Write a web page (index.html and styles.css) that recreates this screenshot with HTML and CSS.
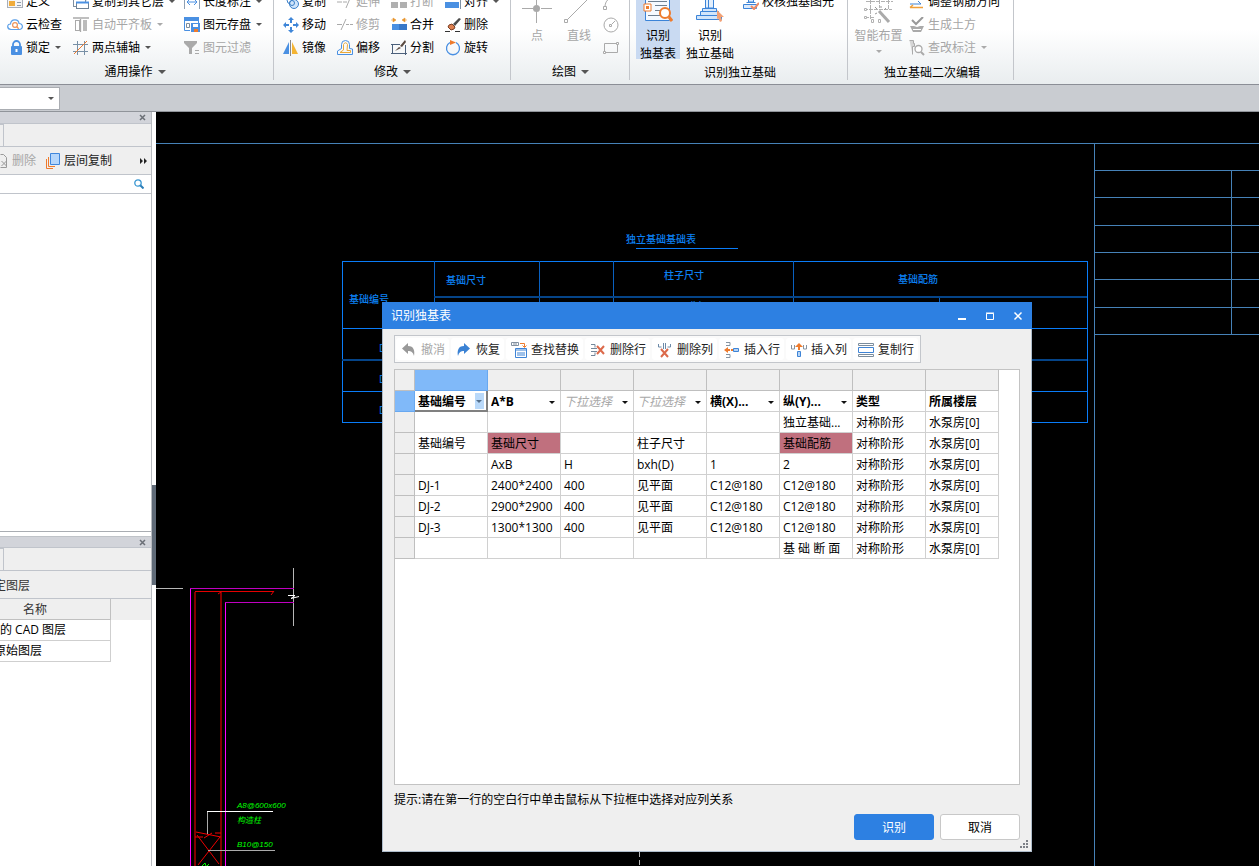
FILE: index.html
```html
<!DOCTYPE html>
<html lang="zh-CN">
<head>
<meta charset="utf-8">
<title>识别独基表</title>
<link rel="stylesheet" href="styles.css">
</head>
<body>
<div class="app">

<header class="ribbon">
  <section class="group group-common">
    <div class="tools">
      <button class="tool"><svg class="icon" viewBox="0 0 16 16"><rect x=".5" y=".5" width="15" height="13" fill="#f4f5f7" stroke="#a9afb8"/><path d="M2 7h6v5H2z" fill="#f0ac3c"/><path d="M2 3h12M10 8.500h4M10 11.500h4" stroke="#8f9cab"/></svg>定义</button>
      <button class="tool"><svg class="icon" viewBox="0 0 16 16"><rect x="4" y="1" width="9" height="5" fill="none" stroke="#7d8ea0"/><rect x=".5" y="4.500" width="12" height="8" fill="#fff" stroke="#7d8ea0"/><rect x="3.500" y="8.500" width="12" height="6" fill="#fff" stroke="#6f8296"/><path d="M3 8.500h13" stroke="#4a90e2" stroke-width="2"/></svg>复制到其它层<i class="caret"></i></button>
      <button class="tool"><svg class="icon" viewBox="0 0 16 16"><path d="M.5 3v12M15.500 3v12" stroke="#8fa0b2"/><path d="M3 8h10M6 5 3 8l3 3M10 5l3 3-3 3" fill="none" stroke="#4a90e2"/></svg>长度标注<i class="caret"></i></button>
      <button class="tool"><svg class="icon" viewBox="0 0 16 16"><path d="M4 12.500C-.8 12 .2 6.700 3.500 7 4 1.800 11.500 1.500 12 6.500c4.500.3 4.500 6 0 6z" fill="#fff" stroke="#5b9fe8" stroke-width="1.200"/><circle cx="8" cy="8" r="2.400" fill="#fff" stroke="#ee9356" stroke-width="1.200"/><path d="m9.700 9.700 2 2" stroke="#ee9356" stroke-width="1.300"/></svg>云检查</button>
      <button class="tool" disabled><svg class="icon" viewBox="0 0 16 16"><path d="M0 1h16M7.500 2v13" stroke="#aaa" stroke-width="1.300"/><rect x="2.500" y="3.500" width="4" height="10" fill="none" stroke="#aaa"/><path d="M10 3h4v11h-4z" fill="#bbb"/></svg>自动平齐板<i class="caret"></i></button>
      <button class="tool"><svg class="icon" viewBox="0 0 16 16"><path d="M6 13.500H.5v-13h14V6" fill="none" stroke="#4a90e2"/><path d="M0 0h15v4H0z" fill="#4a90e2"/><path d="M2.500 6.500h3v4h-3z" fill="none" stroke="#7e8b99"/><path d="M7 6h9v9H7z" fill="#4a90e2"/><path d="M9 7h5v3H9z" fill="#fff"/><path d="M10 12h4v3h-4z" fill="#ee7b2d"/></svg>图元存盘<i class="caret"></i></button>
      <button class="tool"><svg class="icon" viewBox="0 0 16 16"><path d="M6 7V4.500a3 3 0 0 1 7 0V7" fill="none" stroke="#4a90e2" stroke-width="1.800"/><rect x="4" y="6" width="11" height="9" rx="1" fill="#4a90e2"/><path d="M9.500 9v3" stroke="#fff" stroke-width="2"/></svg>锁定<i class="caret"></i></button>
      <button class="tool"><svg class="icon" viewBox="0 0 16 16"><path d="M4.500 1v14M11.500 1v14M0 4.500h15M0 11.500h15" stroke="#7890a6"/><path d="M1 14 14 1" stroke="#ee7b2d"/></svg>两点辅轴<i class="caret"></i></button>
      <button class="tool" disabled><svg class="icon" viewBox="0 0 16 16"><path d="M0 1h13v2L8 8v6H5V8L0 3z" fill="#aaa"/><path d="M11 10.500h4M11 13.500h4" stroke="#aaa"/></svg>图元过滤</button>
    </div>
    <button class="group-title">通用操作<i class="caret"></i></button>
  </section>

  <section class="group group-edit">
    <div class="tools">
      <button class="tool"><svg class="icon" viewBox="0 0 16 16"><circle cx="8" cy="6" r="4" fill="none" stroke="#3a7fc8"/><circle cx="11" cy="10" r="4.500" fill="#cfe4fa" stroke="#3a7fc8"/><circle cx="9" cy="9" r="2.500" fill="none" stroke="#3a7fc8"/></svg>复制</button>
      <button class="tool" disabled><svg class="icon" viewBox="0 0 16 16"><path d="M0 8h5M6 8h4M9 14l5-12" stroke="#aaa"/></svg>延伸</button>
      <button class="tool" disabled><svg class="icon" viewBox="0 0 16 16"><path d="M0 8h7v6H0zM9 8h7v6H9z" fill="#b0b0b0"/></svg>打断</button>
      <button class="tool"><svg class="icon" viewBox="0 0 16 16"><path d="M0 8h14v6H0z" fill="#4a90e2"/><path d="M15.500 0v15" stroke="#7f92a6"/></svg>对齐<i class="caret"></i></button>
      <button class="tool"><svg class="icon" viewBox="0 0 16 16"><path d="M8 0 5 3h2v3h2V3h2zM8 16l3-3H9v-3H7v3H5zM0 8l3-3v2h3v2H3v2zM16 8l-3-3v2h-3v2h3v2z" fill="#3f86d8"/></svg>移动</button>
      <button class="tool" disabled><svg class="icon" viewBox="0 0 16 16"><path d="M0 7.500h5M9 7.500h3M13 7.500h3M4 13 9 2" stroke="#aaa"/></svg>修剪</button>
      <button class="tool"><svg class="icon" viewBox="0 0 16 16"><path d="M1 7h7v6H1z" fill="#4a90e2"/><path d="M8 7h8v6H8z" fill="#3878c8"/><path d="M0 3h3M16 3h-3M2 1l3 2-3 2zM14 1l-3 2 3 2z" fill="#e8942c" stroke="#e8942c" stroke-width=".6"/></svg>合并</button>
      <button class="tool"><svg class="icon" viewBox="0 0 16 16"><path d="m8 7 6-6 2 1-6 7z" fill="#4b4b4b"/><path d="M4 8 7 7l3 3-1 2-3 1-3-3z" fill="#dd8050" stroke="#7b3e23"/><path d="M0 14.500h5M10 14.500h5" stroke="#333"/></svg>删除</button>
      <button class="tool"><svg class="icon" viewBox="0 0 16 16"><path d="M6 2v12H0z" fill="#4a90e2"/><path d="M7.500 0v16" stroke="#888"/><path d="M9 2v12h6z" fill="#f4b433"/></svg>镜像</button>
      <button class="tool"><svg class="icon" viewBox="0 0 16 16"><path d="M.5 14.500V11l4-2.500V4.500q0-4 4-4t4 4v4" fill="none" stroke="#4a90e2"/><path d="M.5 14.500h15V9l-3-.5" fill="none" stroke="#4a90e2"/><path d="M3 12.500h10.500v-2H10l.5-6q-2-3.500-4 0V10L3 12.500" fill="none" stroke="#e9a93b"/></svg>偏移</button>
      <button class="tool"><svg class="icon" viewBox="0 0 16 16"><path d="M0 4.500h9M1.500 4v10M0 13.500h16M14.500 5v10" stroke="#4b607b"/><path d="m4 11 4-4 2 1zM9 6l5-6 1 2-4 5z" fill="#5a4a40"/></svg>分割</button>
      <button class="tool"><svg class="icon" viewBox="0 0 16 16"><path d="M5 2.500a6.500 6.500 0 1 0 6 0" fill="none" stroke="#4a90e2" stroke-width="1.300"/><path d="m5 0 6 2.500L5 5z" fill="#ee7b2d"/></svg>旋转</button>
    </div>
    <button class="group-title">修改<i class="caret"></i></button>
  </section>

  <section class="group group-draw">
    <div class="tools">
      <button class="big" disabled><svg class="big-icon" viewBox="0 0 30 34"><path d="M14.500 3v12M14.500 21v12M0 18.500h11M19 18.500h11" stroke="#aaa"/><circle cx="14.500" cy="18.500" r="3.500" fill="#aaa"/></svg><span>点</span></button>
      <button class="big" disabled><svg class="big-icon" viewBox="0 0 30 34"><path d="M3 30 28 5" stroke="#aaa"/><path d="M.5 29.500h3v3h-3zM27 3h3v3h-3z" fill="#fff" stroke="#aaa"/></svg><span>直线</span></button>
      <div class="mini">
        <button class="tool" disabled aria-label="弧"><svg class="icon" viewBox="0 0 16 16"><path d="M2 13C2 7 6 3 13 3" fill="none" stroke="#aaa"/><path d="M.5 12.500h3v3h-3z" fill="none" stroke="#aaa"/></svg></button>
        <button class="tool" disabled aria-label="圆"><svg class="icon" viewBox="0 0 16 16"><circle cx="8" cy="8" r="7" fill="none" stroke="#aaa"/><path d="M6.500 7.500h2v2h-2zM9 7l3-3" fill="none" stroke="#aaa"/></svg></button>
        <button class="tool" disabled aria-label="矩形"><svg class="icon" viewBox="0 0 16 16"><path d="M1.500 3.500h13v9h-13z" fill="none" stroke="#aaa"/><path d="M.5 11.500h2v2h-2zM13.500 2.500h2v2h-2z" fill="#fff" stroke="#aaa"/></svg></button>
      </div>
    </div>
    <button class="group-title">绘图<i class="caret"></i></button>
  </section>

  <section class="group group-detect">
    <div class="tools">
      <button class="big selected"><svg class="big-icon" viewBox="0 0 30 34"><path d="M2.500 1v29.500h24V1" fill="#f5f9ff" stroke="#3c84d8"/><path d="M12 15.500h12M12 20.500h6M5 25.500h12M5 11.500h19" stroke="#6d7e90"/><path d="M1 14h7v7H1z" fill="#fff" stroke="#ee7b2d"/><path d="M3 16h3v3H3z" fill="#ee7b2d"/><circle cx="22" cy="23" r="5" fill="#fff" stroke="#ee7b2d" stroke-width="2"/><path d="m26 27 3 4" stroke="#ee7b2d" stroke-width="3"/></svg><span>识别<br>独基表</span></button>
      <button class="big"><svg class="big-icon" viewBox="0 0 30 34"><path d="M10.500 1v17h8V1M13.500 0v18" fill="#e3effc" stroke="#3c84d8"/><path d="M7.500 18.500h14v3h-14zM5.500 21.500h18v4h-18zM1.500 25.500h25v4h-25z" fill="#d2e5fa" stroke="#3c84d8"/><path d="m22 20 7 7h-3l1 4-2 1-2-4-1 2z" fill="#f2a176"/></svg><span>识别<br>独立基础</span></button>
      <button class="tool"><svg class="icon" viewBox="0 0 16 16"><path d="M5.500 0v8h5V0M3.500 8.500h9M.5 10.500h13v4H.5z" fill="#dceafb" stroke="#3c84d8"/><path d="m8 12 3 3 5-6" fill="none" stroke="#ee8a64" stroke-width="2"/></svg>校核独基图元</button>
    </div>
    <div class="group-title">识别独立基础</div>
  </section>

  <section class="group group-second">
    <div class="tools">
      <button class="big" disabled><svg class="big-icon" viewBox="0 0 30 34"><path d="M2 11.500h27M0 19.500h28M1 27.500h10M6.500 5v25M15.500 5v13M24.500 5v14" stroke="#b2b2b2" stroke-dasharray="4 1"/><path d="m15 21 10 11" stroke="#aaa" stroke-width="3"/><path d="m11 17 2 2M17 16v2M11 24l2-1M22 18l-2 2" stroke="#999"/><path d="M7.500 29.500h2v3h-2zM14.500 29.500h2v3h-2zM.5 26.500h2v2h-2zM.5 18.500h2v2h-2z" fill="#fff" stroke="#b2b2b2"/></svg><span>智能布置</span><i class="caret"></i></button>
      <div class="mini">
        <button class="tool"><svg class="icon" viewBox="0 0 16 16"><path d="M1 10h11M9 7l3 3" stroke="#3f84d6" fill="none"/><path d="M1 13.500h13M4 11l-3 2.500" stroke="#f0a03a" stroke-width="1.500" fill="none"/></svg>调整钢筋方向</button>
        <button class="tool" disabled><svg class="icon" viewBox="0 0 16 16"><path d="m3 3 4 4 7-7" fill="none" stroke="#999" stroke-width="2"/><path d="M1 9h4l3 1 3-1h4l-3 6H4z" fill="#aaa"/><path d="M4 12.500h8" stroke="#fff"/></svg>生成土方</button>
        <button class="tool" disabled><svg class="icon" viewBox="0 0 16 16"><path d="M.5.500h4v3h1v3h-2v8" fill="#d5d5d5" stroke="#aaa"/><circle cx="9.500" cy="9" r="3.500" fill="#fff" stroke="#aaa" stroke-width="1.300"/><path d="m12 12 3 3" stroke="#aaa" stroke-width="2"/></svg>查改标注<i class="caret"></i></button>
      </div>
    </div>
    <div class="group-title">独立基础二次编辑</div>
  </section>
</header>

<div class="strip"><select class="layer-select" aria-label="楼层"><option></option></select><i class="caret"></i></div>

<main class="workspace">
  <aside class="side">
    <section class="pane pane-top">
      <div class="pane-bar"><button class="close" aria-label="关闭"><svg viewBox="0 0 7 7"><path d="m1 1 5 5M6 1 1 6" stroke="#6b6f76" stroke-width="1.500"/></svg></button></div>
      <div class="tab-row"></div>
      <div class="pane-tools">
        <button class="tool" disabled><svg class="half-icon" viewBox="0 0 8 16"><path d="M0 1.500h3l3 3v10H0" fill="#eee" stroke="#999"/><path d="m1 8 5 5M6 8l-5 5" stroke="#999"/></svg>删除</button>
        <button class="tool"><svg class="icon" viewBox="0 0 16 16"><path d="M1.500 6v9.500H8M3.500 4v9.500H10" fill="none" stroke="#ee7b2d"/><path d="M5.500.5h9v11h-9z" fill="#b5d6fb" stroke="#3f86dc"/></svg>层间复制</button>
        <button class="more" aria-label="更多"><svg viewBox="0 0 8 6"><path d="m0 0 3 3-3 3zM4 0l3 3-3 3z" fill="#222"/></svg></button>
      </div>
      <label class="search"><input type="text" aria-label="搜索"><svg viewBox="0 0 10 10"><circle cx="4" cy="4" r="3.200" fill="none" stroke="#3a97d2" stroke-width="1.300"/><path d="m6.500 6.500 3 3" stroke="#2d7fb8" stroke-width="2"/></svg></label>
    </section>
    <section class="pane pane-bottom">
      <div class="pane-bar"><button class="close" aria-label="关闭"><svg viewBox="0 0 7 7"><path d="m1 1 5 5M6 1 1 6" stroke="#6b6f76" stroke-width="1.500"/></svg></button></div>
      <div class="tab-row"></div>
      <div class="caption clipped">定图层</div>
      <div class="layers-wrap">
        <table class="layers">
          <tr><th>名称</th></tr>
          <tr><td>的 CAD 图层</td></tr>
          <tr><td class="clipped">原始图层</td></tr>
        </table>
      </div>
    </section>
  </aside>
  <div class="splitter"><button class="handle" aria-label="折叠"></button></div>

  <div class="canvas">
    <svg class="drawing" shape-rendering="crispEdges">
      <g transform="translate(-156 -112)" fill="none">
        <g stroke="#4682b8">
          <path d="M156 143.500H1259M1094.500 143V866"/>
          <path d="M1094 170.500H1259M1094 197.500H1259M1094 225.500H1259M1094 252.500H1259M1094 279.500H1259M1094 307.500H1259M1094 334.500H1259M1231.500 170V334"/>
        </g>
        <g stroke="#0a7cf8">
          <path d="M636 248.500H738M342.500 261V422.500H1087.500V261.500H342.500M342 328.500H1087M342 391.500H1087"/>
          <path stroke="#0960c0" d="M434.500 261V422M539.500 261V422M613.500 261V422M793.500 261V422M939.500 297V422"/>
          <path stroke="#054488" stroke-width="2" d="M342 360H1087M434 297H1087"/>
        </g>
        <g class="cad-text">
          <text x="626" y="243">独立基础基础表</text>
          <text x="446" y="284">基础尺寸</text>
          <text x="664" y="279">柱子尺寸</text>
          <text x="898" y="283">基础配筋</text>
          <text x="349" y="303">基础编号</text>
          <text x="379" y="352">D</text>
          <text x="379" y="383">D</text>
          <text x="379" y="414">D</text>
          <text x="690" y="309">(b)</text>
        </g>
        <path stroke="#b8b8b8" d="M156 588.500H183M293.500 568V626"/>
        <path stroke="#b8b8b8" stroke-dasharray="5 3" d="M639.500 852V866"/>
        <g stroke="#f0f">
          <path d="M190.500 866V588"/><path d="M225.500 866V602"/>
          <path stroke="#c000c0" d="M190 588.500H294M225 602.500H294"/>
        </g>
        <path stroke="#820000" stroke-width="2" d="M195 592V866M221 592V866"/>
        <path stroke="#e60000" d="M195 591.500H274"/>
        <path stroke="#e60000" d="M274 591l-3 4M221 592l-3 2" shape-rendering="auto"/>
        <path stroke="#fff" d="M288 595.500h7l-4 3 8-2" shape-rendering="auto"/>
        <g stroke="#e00" shape-rendering="auto">
          <path d="M196 832l25 5M195 837h8M204 838l8-5M215 833h6M197 835l22 29M220 837l-22 28"/>
        </g>
        <path stroke="#aaa" d="M207.500 811V834M208 850.500H275"/>
        <path stroke="#fff" d="M207 811.500H273"/>
        <path stroke="#0f0" d="M202 866l3-3 1 3M207 866l2-2" shape-rendering="auto"/>
        <g class="note-text">
          <text x="237" y="808">A8@600x600</text>
          <text x="237" y="823">构造柱</text>
          <text x="237" y="847">B10@150</text>
        </g>
      </g>
    </svg>

    <section class="dialog" role="dialog" aria-labelledby="dialog-title">
      <header class="titlebar">
        <h1 id="dialog-title">识别独基表</h1>
        <button aria-label="最小化"><svg viewBox="0 0 10 10"><path d="M1 8h8" stroke="#fff" stroke-width="2"/></svg></button>
        <button aria-label="最大化"><svg viewBox="0 0 10 10"><path d="M1.500 2.500h7v6h-7zM1 2h8" fill="none" stroke="#fff"/></svg></button>
        <button aria-label="关闭"><svg viewBox="0 0 10 10"><path d="m1.500 1.500 7 7M8.500 1.500l-7 7" stroke="#fff" stroke-width="1.500"/></svg></button>
      </header>
      <div class="dialog-body">
        <div class="toolbar">
          <button disabled><svg class="icon" viewBox="0 0 16 16"><path d="M7 1v3c6 0 7 5 6 10-1-4-3-5-6-5v3L1 6.500z" fill="#999"/></svg>撤消</button>
          <button><svg class="icon" viewBox="0 0 16 16"><path d="M8 1v3C2 4 1 9 2 14c1-4 3-5 6-5v3l6-5.500z" fill="#3b82d4"/></svg>恢复</button>
          <button><svg class="icon" viewBox="0 0 16 16"><path d="M.5.500h7v3h-7zM3 0v4M5 0v4" fill="none" stroke="#8290a0"/><path d="M9 1.500h4.500V5M11.500 3.500l2 2 2-2" fill="none" stroke="#ee7b2d"/><path d="M4.500 6.500h11v9h-11z" fill="#fff" stroke="#3f84d6"/><path d="M4 8h12" stroke="#3f84d6"/><path d="M7 10v4M9 10v4M11 10v4M13 10v4" stroke="#3f84d6"/></svg>查找替换</button>
          <button><svg class="icon" viewBox="0 0 16 16"><path d="M1 2.500h4v3M1 13.500h4v-3M1 6.500h6M1 9.500h6" fill="none" stroke="#73879a"/><path d="m7 4 7 8M14 4l-7 8" stroke="#dc6a4b" stroke-width="2"/></svg>删除行</button>
          <button><svg class="icon" viewBox="0 0 16 16"><path d="M1.500 2v3h3M13.500 2v3h-3M6.500 1v6M8.500 1v6" fill="none" stroke="#6d8aa8"/><path d="m4 7 7 8M11 7l-7 8" stroke="#dc6a4b" stroke-width="2"/></svg>删除列</button>
          <button><svg class="icon" viewBox="0 0 16 16"><path d="M2 .5h4v3H2M2 15.500h4v-3H2" fill="none" stroke="#8593a1"/><path d="M7 7h2v2H7zM0 8l4-3v2h2v2H4v2z" fill="#ee7b2d"/><path d="M9.500 6.500h5v3h-5z" fill="#b5d5f7" stroke="#3f84d6"/></svg>插入行</button>
          <button><svg class="icon" viewBox="0 0 16 16"><path d="M.5 3v4h3V3M12.500 3v4h3V3" fill="none" stroke="#8593a1"/><path d="M8 1l4 4H9v3H7V5H4z" fill="#ee7b2d"/><path d="M6.500 9.500h3v5h-3z" fill="#b5d5f7" stroke="#3f84d6"/></svg>插入列</button>
          <button><svg class="icon" viewBox="0 0 16 16"><path d="M.5 1.500h15v2H.5zM.5 12.500h15v2H.5z" fill="#fff" stroke="#7b8c9c"/><path d="M.5 5.500h15v5H.5z" fill="#fff" stroke="#3f84d6"/></svg>复制行</button>
        </div>

        <div class="sheet">
          <table class="grid">
            <thead>
              <tr><th></th><th class="active"></th><th></th><th></th><th></th><th></th><th></th><th></th><th></th></tr>
            </thead>
            <tbody>
              <tr class="mapping">
                <th class="active"></th>
                <td class="current"><span class="pick"><select aria-label="第1列"><option>基础编号</option></select></span></td>
                <td><span class="pick"><select aria-label="第2列"><option>A*B</option></select></span></td>
                <td><span class="pick empty"><select aria-label="第3列"><option>下拉选择</option></select></span></td>
                <td><span class="pick empty"><select aria-label="第4列"><option>下拉选择</option></select></span></td>
                <td><span class="pick"><select aria-label="第5列"><option>横(X)...</option></select></span></td>
                <td><span class="pick"><select aria-label="第6列"><option>纵(Y)...</option></select></span></td>
                <td>类型</td><td>所属楼层</td>
              </tr>
              <tr><th></th><td></td><td></td><td></td><td></td><td></td><td>独立基础...</td><td>对称阶形</td><td>水泵房[0]</td></tr>
              <tr><th></th><td>基础编号</td><td class="flag">基础尺寸</td><td></td><td>柱子尺寸</td><td></td><td class="flag">基础配筋</td><td>对称阶形</td><td>水泵房[0]</td></tr>
              <tr><th></th><td></td><td>AxB</td><td>H</td><td>bxh(D)</td><td>1</td><td>2</td><td>对称阶形</td><td>水泵房[0]</td></tr>
              <tr><th></th><td>DJ-1</td><td>2400*2400</td><td>400</td><td>见平面</td><td>C12@180</td><td>C12@180</td><td>对称阶形</td><td>水泵房[0]</td></tr>
              <tr><th></th><td>DJ-2</td><td>2900*2900</td><td>400</td><td>见平面</td><td>C12@180</td><td>C12@180</td><td>对称阶形</td><td>水泵房[0]</td></tr>
              <tr><th></th><td>DJ-3</td><td>1300*1300</td><td>400</td><td>见平面</td><td>C12@180</td><td>C12@180</td><td>对称阶形</td><td>水泵房[0]</td></tr>
              <tr><th></th><td></td><td></td><td></td><td></td><td></td><td>基 础 断 面</td><td>对称阶形</td><td>水泵房[0]</td></tr>
            </tbody>
          </table>
        </div>

        <p class="hint">提示:请在第一行的空白行中单击鼠标从下拉框中选择对应列关系</p>
        <footer class="actions">
          <button class="primary">识别</button>
          <button>取消</button>
        </footer>
      </div>
      <svg class="grip" viewBox="0 0 8 8"><path d="M6 0h2v2H6zM3 3h2v2H3zM6 3h2v2H6zM0 6h2v2H0zM3 6h2v2H3zM6 6h2v2H6z" fill="#7c8087"/></svg>
    </section>
  </div>
</main>
</div>
</body>
</html>
```
FILE: styles.css
```css
* { box-sizing: border-box; }
body {
  margin: 0;
  font: 12px/16px "Open Sans", "Noto Sans CJK SC", sans-serif;
  color: #000;
}
button, select, input { font: inherit; color: inherit; }
button { padding: 0; border: 0; background: none; white-space: nowrap; }
button:disabled { color: #a6a6a6; }
.app { display: flex; flex-direction: column; height: 100vh; overflow: hidden; }
.icon { flex: none; width: 16px; height: 16px; }
.caret {
  flex: none;
  border: solid transparent;
  border-width: 3px 3px 0;
  border-top-color: #555;
}
button:disabled .caret { border-top-color: #aaa; }

/* Ribbon */
.ribbon {
  flex: none;
  display: flex;
  align-items: flex-end;
  height: 85px;
  overflow: hidden;
  border-bottom: 1px solid #8b8e96;
  background: linear-gradient(#fff 35%, #e9edef);
}
.group { position: relative; display: flex; flex-direction: column; height: 94px; }
.group::after {
  content: "";
  position: absolute;
  right: 0;
  bottom: 4px;
  height: 90px;
  border-right: 1px solid #c3c6cb;
}
.group-common { width: 274px; }
.group-edit { width: 237px; }
.group-draw { width: 119px; }
.group-detect { width: 218px; }
.group-second { width: 166px; }
.tools { display: grid; grid-auto-rows: 23px; align-items: center; }
.group-common .tools { grid-template-columns: 66px 111px auto; padding-left: 7px; }
.group-edit .tools { grid-template-columns: repeat(4, 54px); padding-left: 9px; }
.group-draw .tools, .group-detect .tools, .group-second .tools {
  display: flex;
  align-items: flex-start;
  height: 69px;
}
.group-draw .tools { padding-left: 5px; }
.group-detect .tools { padding-left: 6px; }
.group-second .tools { padding-left: 6px; gap: 6px; }
.tool { display: flex; align-items: center; gap: 3px; height: 23px; }
.tool .caret { margin-left: 2px; }
.group-title {
  display: flex;
  align-items: center;
  justify-content: center;
  gap: 5px;
  height: 25px;
}
.group-title .caret { border-width: 4px 4px 0; }
.group-common .group-title { padding-right: 4px; }
.group-detect .group-title, .group-second .group-title { padding: 2px 0 0 2px; }
.big {
  display: flex;
  flex-direction: column;
  align-items: center;
  width: 42px;
  height: 69px;
  line-height: 18px;
}
.big-icon { flex: none; width: 30px; height: 34px; margin-bottom: 3px; }
.big .caret { margin-top: 5px; }
.big.selected { width: 44px; background: #c9daf2; }
.group-detect .big + .big { width: 60px; }
.group-detect .tool { margin-left: 3px; }
.group-draw .mini { margin-left: 3px; }
.group-second .big { width: 49px; }

.strip {
  flex: none;
  display: flex;
  align-items: center;
  height: 27px;
  border-bottom: 1px solid #90949a;
  background: #c9ccd1;
}
.layer-select {
  appearance: none;
  width: 60px;
  height: 23px;
  border: 1px solid #aaadb2;
  border-left: 0;
  border-radius: 0;
  background: #fff;
}
.strip .caret { margin-left: -12px; }

/* Docked panes */
.workspace { flex: 1; display: flex; min-height: 0; }
.side {
  flex: none;
  display: flex;
  flex-direction: column;
  gap: 4px;
  width: 152px;
  border-right: 1px solid #b8bbc0;
}
.pane { display: flex; flex-direction: column; min-height: 0; overflow: hidden; }
.pane-top { flex: 14 1 0; border-bottom: 1px solid #a9adb2; }
.pane-bottom { flex: 11 1 0; }
.pane-bar {
  display: flex;
  justify-content: flex-end;
  align-items: center;
  height: 12px;
  padding-right: 5px;
  border-bottom: 1px solid #c0c4cb;
  background: #d2d4da;
}
.pane-bottom .pane-bar { border-top: 1px solid #bfc3c8; }
.close { display: flex; }
.close svg { width: 7px; height: 7px; }
.tab-row { height: 23px; border-bottom: 1px solid #c0c4cb; background: #efefef; }
.tab-row::before {
  content: "";
  display: block;
  width: 3px;
  height: 22px;
  border: solid #c0c4cb;
  border-width: 1px 1px 0 0;
}
.pane-tools {
  display: flex;
  align-items: center;
  gap: 9px;
  height: 28px;
  padding-top: 1px;
  border-bottom: 1px solid #c0c4cb;
  background: #efefef;
  color: #222;
}
.half-icon { width: 9px; height: 16px; }
.more { display: flex; margin-left: auto; margin-right: 3px; }
.more svg { width: 8px; height: 6px; }
.search {
  display: flex;
  align-items: center;
  height: 19px;
  padding-right: 7px;
  border-bottom: 1px solid #c0c4cb;
}
.search input { flex: 1; min-width: 0; height: 16px; border: 0; outline: 0; }
.search svg { width: 10px; height: 10px; }
.clipped { text-indent: -6px; }
.caption {
  height: 28px;
  line-height: 30px;
  border-bottom: 1px solid #c0c4cb;
  background: #efefef;
  color: #333;
}
.layers-wrap { background: linear-gradient(#efefef 21px, #fff 21px); }
.layers { width: 111px; border-spacing: 0; }
.layers th, .layers td {
  height: 21px;
  padding: 0;
  border: solid #cfcfcf;
  border-width: 0 1px 1px 0;
  text-align: left;
}
.layers th { padding: 1px 0 0 23px; border-color: #c0c0c0; font-weight: 400; color: #333; }
.splitter { flex: none; display: flex; align-items: center; width: 4px; background: #fff; }
.handle {
  width: 4px;
  height: 100px;
  margin-top: 92px;
  background: #606b78;
}
.handle::before {
  content: "";
  display: block;
  width: 4px;
  border: solid transparent;
  border-width: 3px 3px 3px 0;
  border-right-color: #ccd0d5;
}

/* Drawing area */
.canvas { flex: 1; position: relative; min-width: 0; overflow: hidden; background: #000; }
.drawing { display: block; width: 100%; height: 100%; }
.cad-text { fill: #0c80f4; font-size: 10px; font-weight: 500; }
.note-text {
  fill: #0f0;
  font: italic 8px "Liberation Sans", "Noto Sans CJK SC", sans-serif;
}

/* Dialog */
.dialog {
  position: absolute;
  left: 226px;
  top: 190px;
  width: 650px;
  border: solid #aebccb;
  border-width: 0 1px 1px;
  background: #efefef;
}
.titlebar {
  display: flex;
  align-items: center;
  gap: 18px;
  height: 27px;
  margin: 0 -1px;
  padding: 0 9px;
  background: #2d80e2;
  color: #fff;
}
.titlebar h1 { flex: 1; margin: 0; font-size: 12px; font-weight: 400; }
.titlebar button { display: flex; }
.titlebar svg { width: 10px; height: 10px; }
.dialog-body {
  display: flex;
  flex-direction: column;
  align-items: flex-start;
  padding: 6px 11px 11px;
}
.toolbar {
  display: flex;
  gap: 2px;
  height: 28px;
  padding: 2px 2px 2px 1px;
  border: 1px solid #c3c6cb;
  background: #fafafa;
}
.toolbar button {
  display: flex;
  align-items: center;
  gap: 4px;
  padding: 1px 4px 0 5px;
  border-radius: 3px;
  background: #fff;
  color: #222;
}
.toolbar button:disabled { color: #a6a6a6; }
.sheet {
  align-self: stretch;
  height: 416px;
  margin-top: 6px;
  border: 1px solid #c3c3c3;
  background: #fff;
}
.grid { width: 604px; table-layout: fixed; border-spacing: 0; }
.grid th, .grid td {
  height: 21px;
  padding: 2px 0 0 3px;
  border: solid #d0d0d0;
  border-width: 0 1px 1px 0;
  overflow: hidden;
  text-align: left;
  white-space: nowrap;
}
.grid th { border-color: #bfbfbf; background: #efefef; }
.grid th:first-child { width: 20px; }
.grid .active { border-color: #68a8f0; background: #80b9f9; }
.grid .flag { background: #c0707e; }
.mapping { font-weight: 700; }
.grid .current { border-right: 2px solid #808080; border-bottom: 2px solid #808080; }
.pick { position: relative; display: block; height: 17px; }
.pick select {
  appearance: none;
  display: block;
  width: 100%;
  height: 17px;
  padding: 0;
  border: 0;
  background: none;
}
.pick::after {
  content: "";
  position: absolute;
  right: 5px;
  top: 7px;
  border: solid transparent;
  border-width: 3px 3px 0;
  border-top-color: #111;
}
.current .pick::before {
  content: "";
  position: absolute;
  right: 2px;
  top: 0;
  width: 9px;
  height: 16px;
  background: #b9d9fa;
}
.current .pick::after { right: 4px; border-top-color: #55708c; }
.pick.empty { font-style: italic; font-weight: 400; color: #a8a8a8; }
.hint { margin: 7px 0 6px; }
.actions { align-self: flex-end; display: flex; gap: 6px; }
.actions button {
  width: 80px;
  height: 26px;
  padding-top: 1px;
  border: 1px solid #c8c8c8;
  border-radius: 3px;
  background: #fff;
}
.actions .primary { border-color: #2d80e2; background: #2d80e2; color: #fff; }
.grip { position: absolute; right: 3px; bottom: 3px; width: 8px; height: 8px; }
```
